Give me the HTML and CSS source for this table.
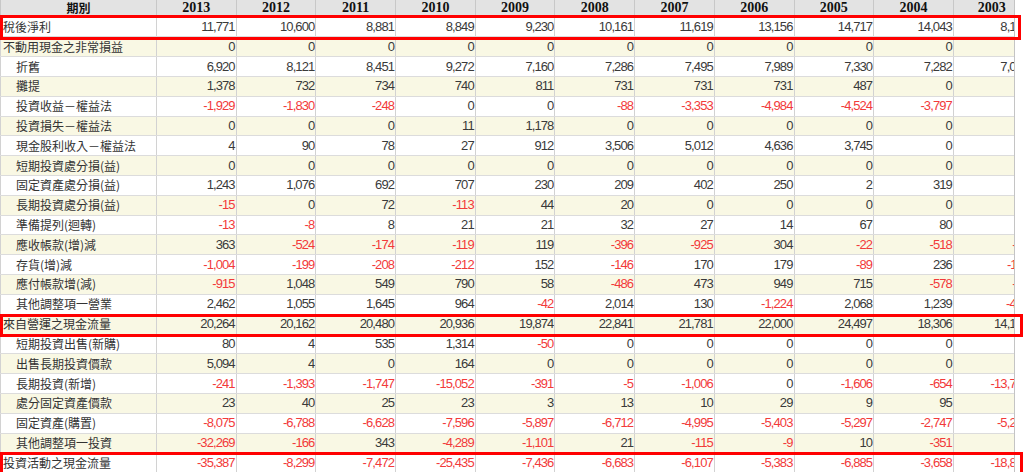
FILE: index.html
```html
<!DOCTYPE html>
<html lang="zh-Hant">
<head>
<meta charset="utf-8">
<title>現金流量表</title>
<link rel="stylesheet" href="styles.css">
</head>
<body>
<div class="sheet">
  <div class="viewport">
    <table class="cf">
      <colgroup>
        <col class="c-label">
        <col class="c-year"><col class="c-year"><col class="c-year"><col class="c-year"><col class="c-year">
        <col class="c-year"><col class="c-year"><col class="c-year"><col class="c-year"><col class="c-year"><col class="c-last">
      </colgroup>
      <thead>
        <tr class="head">
          <th class="h-label">期別</th>
          <th>2013</th><th>2012</th><th>2011</th><th>2010</th><th>2009</th><th>2008</th><th>2007</th><th>2006</th><th>2005</th><th>2004</th><th>2003</th>
        </tr>
      </thead>
      <tbody>
        <tr class="odd"><td class="lbl top">稅後淨利</td><td>11,771</td><td>10,600</td><td>8,881</td><td>8,849</td><td>9,230</td><td>10,161</td><td>11,619</td><td>13,156</td><td>14,717</td><td>14,043</td><td>8,170</td></tr>
        <tr class="even"><td class="lbl top">不動用現金之非常損益</td><td>0</td><td>0</td><td>0</td><td>0</td><td>0</td><td>0</td><td>0</td><td>0</td><td>0</td><td>0</td><td>0</td></tr>
        <tr class="odd"><td class="lbl">折舊</td><td>6,920</td><td>8,121</td><td>8,451</td><td>9,272</td><td>7,160</td><td>7,286</td><td>7,495</td><td>7,989</td><td>7,330</td><td>7,282</td><td>7,016</td></tr>
        <tr class="even"><td class="lbl">攤提</td><td>1,378</td><td>732</td><td>734</td><td>740</td><td>811</td><td>731</td><td>731</td><td>731</td><td>487</td><td>0</td><td>0</td></tr>
        <tr class="odd"><td class="lbl">投資收益－權益法</td><td class="neg">-1,929</td><td class="neg">-1,830</td><td class="neg">-248</td><td>0</td><td>0</td><td class="neg">-88</td><td class="neg">-3,353</td><td class="neg">-4,984</td><td class="neg">-4,524</td><td class="neg">-3,797</td><td>0</td></tr>
        <tr class="even"><td class="lbl">投資損失－權益法</td><td>0</td><td>0</td><td>0</td><td>11</td><td>1,178</td><td>0</td><td>0</td><td>0</td><td>0</td><td>0</td><td>32</td></tr>
        <tr class="odd"><td class="lbl">現金股利收入－權益法</td><td>4</td><td>90</td><td>78</td><td>27</td><td>912</td><td>3,506</td><td>5,012</td><td>4,636</td><td>3,745</td><td>0</td><td>0</td></tr>
        <tr class="even"><td class="lbl">短期投資處分損(益)</td><td>0</td><td>0</td><td>0</td><td>0</td><td>0</td><td>0</td><td>0</td><td>0</td><td>0</td><td>0</td><td>0</td></tr>
        <tr class="odd"><td class="lbl">固定資產處分損(益)</td><td>1,243</td><td>1,076</td><td>692</td><td>707</td><td>230</td><td>209</td><td>402</td><td>250</td><td>2</td><td>319</td><td>0</td></tr>
        <tr class="even"><td class="lbl">長期投資處分損(益)</td><td class="neg">-15</td><td>0</td><td>72</td><td class="neg">-113</td><td>44</td><td>20</td><td>0</td><td>0</td><td>0</td><td>0</td><td>0</td></tr>
        <tr class="odd"><td class="lbl">準備提列(迴轉)</td><td class="neg">-13</td><td class="neg">-8</td><td>8</td><td>21</td><td>21</td><td>32</td><td>27</td><td>14</td><td>67</td><td>80</td><td>0</td></tr>
        <tr class="even"><td class="lbl">應收帳款(增)減</td><td>363</td><td class="neg">-524</td><td class="neg">-174</td><td class="neg">-119</td><td>119</td><td class="neg">-396</td><td class="neg">-925</td><td>304</td><td class="neg">-22</td><td class="neg">-518</td><td class="neg">-71</td></tr>
        <tr class="odd"><td class="lbl">存貨(增)減</td><td class="neg">-1,004</td><td class="neg">-199</td><td class="neg">-208</td><td class="neg">-212</td><td>152</td><td class="neg">-146</td><td>170</td><td>179</td><td class="neg">-89</td><td>236</td><td class="neg">-112</td></tr>
        <tr class="even"><td class="lbl">應付帳款增(減)</td><td class="neg">-915</td><td>1,048</td><td>549</td><td>790</td><td>58</td><td class="neg">-486</td><td>473</td><td>949</td><td>715</td><td class="neg">-578</td><td class="neg">-52</td></tr>
        <tr class="odd"><td class="lbl">其他調整項一營業</td><td>2,462</td><td>1,055</td><td>1,645</td><td>964</td><td class="neg">-42</td><td>2,014</td><td>130</td><td class="neg">-1,224</td><td>2,068</td><td>1,239</td><td class="neg">-431</td></tr>
        <tr class="even"><td class="lbl top">來自營運之現金流量</td><td>20,264</td><td>20,162</td><td>20,480</td><td>20,936</td><td>19,874</td><td>22,841</td><td>21,781</td><td>22,000</td><td>24,497</td><td>18,306</td><td>14,156</td></tr>
        <tr class="odd"><td class="lbl">短期投資出售(新購)</td><td>80</td><td>4</td><td>535</td><td>1,314</td><td class="neg">-50</td><td>0</td><td>0</td><td>0</td><td>0</td><td>0</td><td>0</td></tr>
        <tr class="even"><td class="lbl">出售長期投資價款</td><td>5,094</td><td>4</td><td>0</td><td>164</td><td>0</td><td>0</td><td>0</td><td>0</td><td>0</td><td>0</td><td>0</td></tr>
        <tr class="odd"><td class="lbl">長期投資(新增)</td><td class="neg">-241</td><td class="neg">-1,393</td><td class="neg">-1,747</td><td class="neg">-15,052</td><td class="neg">-391</td><td class="neg">-5</td><td class="neg">-1,006</td><td>0</td><td class="neg">-1,606</td><td class="neg">-654</td><td class="neg">-13,712</td></tr>
        <tr class="even"><td class="lbl">處分固定資產價款</td><td>23</td><td>40</td><td>25</td><td>23</td><td>3</td><td>13</td><td>10</td><td>29</td><td>9</td><td>95</td><td>0</td></tr>
        <tr class="odd"><td class="lbl">固定資產(購置)</td><td class="neg">-8,075</td><td class="neg">-6,788</td><td class="neg">-6,628</td><td class="neg">-7,596</td><td class="neg">-5,897</td><td class="neg">-6,712</td><td class="neg">-4,995</td><td class="neg">-5,403</td><td class="neg">-5,297</td><td class="neg">-2,747</td><td class="neg">-5,214</td></tr>
        <tr class="even"><td class="lbl">其他調整項一投資</td><td class="neg">-32,269</td><td class="neg">-166</td><td>343</td><td class="neg">-4,289</td><td class="neg">-1,101</td><td>21</td><td class="neg">-115</td><td class="neg">-9</td><td>10</td><td class="neg">-351</td><td>0</td></tr>
        <tr class="odd"><td class="lbl top">投資活動之現金流量</td><td class="neg">-35,387</td><td class="neg">-8,299</td><td class="neg">-7,472</td><td class="neg">-25,435</td><td class="neg">-7,436</td><td class="neg">-6,683</td><td class="neg">-6,107</td><td class="neg">-5,383</td><td class="neg">-6,885</td><td class="neg">-3,658</td><td class="neg">-18,812</td></tr>
      </tbody>
    </table>
  </div>
  <div class="mark mark-net"></div>
  <div class="mark mark-ops"></div>
  <div class="mark mark-inv"></div>
</div>
</body>
</html>
```

FILE: styles.css
```css
html, body {
  margin: 0;
  padding: 0;
  background: #ffffff;
}

.sheet {
  position: relative;
  width: 1024px;
  height: 472px;
  overflow: hidden;
}

.viewport {
  width: 1015px;
  height: 472px;
  overflow: hidden;
  border-right: 1px solid #c4c4c4;
  box-sizing: border-box;
}

.cf {
  table-layout: fixed;
  border-collapse: collapse;
  width: 1029.5px;
}

.c-label { width: 156px; }
.c-year { width: 79.7px; }
.c-last { width: 76.5px; }

.cf th,
.cf td {
  padding: 0;
  border: 1px solid #d2d2d2;
  border-top: none;
  overflow: hidden;
  white-space: nowrap;
}

.head {
  height: 17px;
  background: #e3e3e3;
}

.head th {
  font-family: "Liberation Serif", serif;
  font-size: 14px;
  font-weight: bold;
  color: #111;
  text-align: center;
  line-height: 16px;
  vertical-align: middle;
  border-color: #c8c8c8;
}

.head .h-label {
  font-family: "Noto Sans CJK TC", sans-serif;
  font-size: 12px;
  font-weight: bold;
}

.cf tbody tr {
  height: 19.82px;
}

.odd { background: #ffffff; }
.even { background: #f9f8e4; }

.cf td {
  font-family: "Liberation Sans", Arial, sans-serif;
  font-size: 13px;
  letter-spacing: -0.9px;
  color: #3a3a3a;
  text-align: right;
  padding-right: 1px;
  line-height: 18px;
  vertical-align: middle;
  border-bottom-color: #dcdcdc;
}

.cf td.neg {
  color: #f23a3a;
}

.cf td.lbl {
  font-family: "Noto Sans CJK TC", sans-serif;
  font-size: 12px;
  letter-spacing: 0;
  text-align: left;
  padding-left: 15px;
  padding-right: 0;
  color: #333333;
}

.cf td.lbl.top {
  padding-left: 2px;
}

.mark {
  position: absolute;
  left: 0;
  border: 3px solid #ff0000;
  box-sizing: border-box;
  pointer-events: none;
}

.mark-net {
  top: 15px;
  width: 1021px;
  height: 25px;
}

.mark-ops {
  top: 314px;
  width: 1023px;
  height: 23px;
}

.mark-inv {
  top: 452px;
  width: 1023px;
  height: 30px;
}
```
